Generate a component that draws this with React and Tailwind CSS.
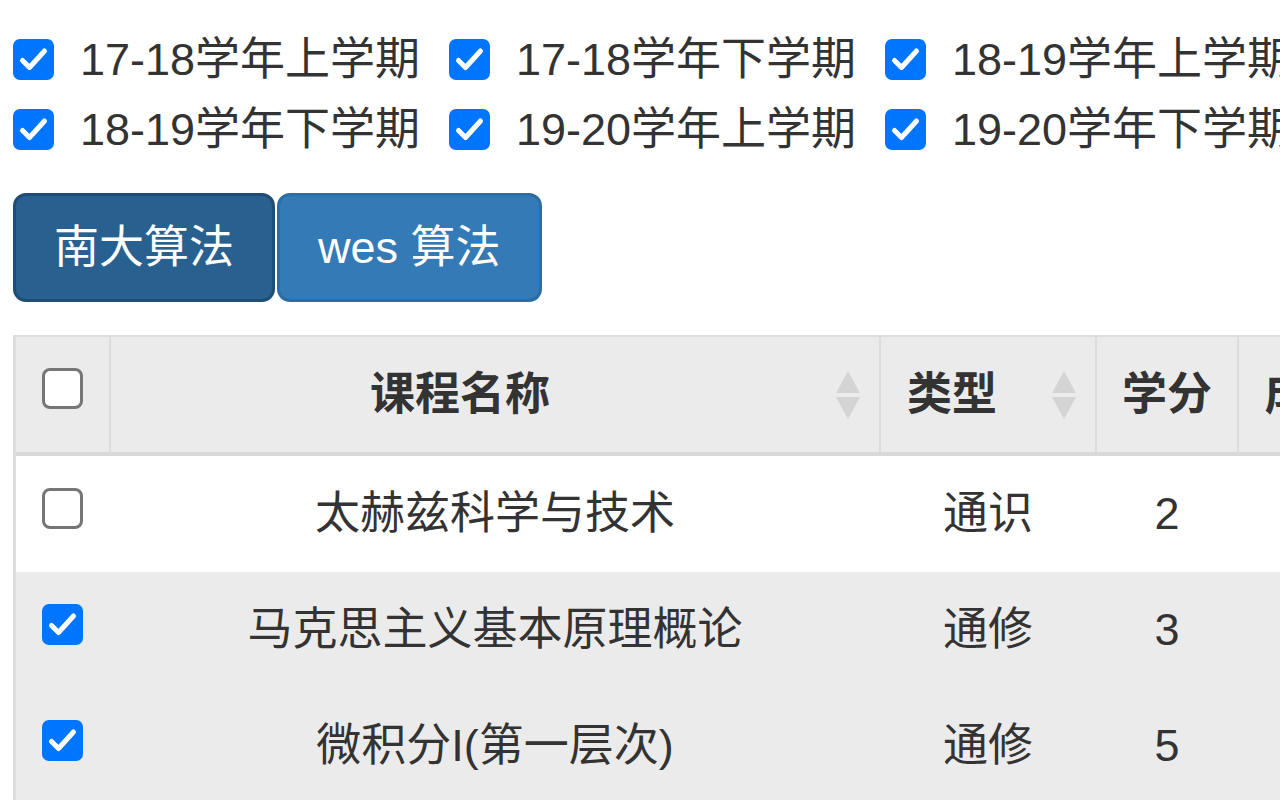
import React from 'react'

const TERMS = [
  ['17-18学年上学期', '17-18学年下学期', '18-19学年上学期'],
  ['18-19学年下学期', '19-20学年上学期', '19-20学年下学期'],
]

const COURSES = [
  { name: '太赫兹科学与技术', type: '通识', credit: '2', score: '88', checked: false },
  { name: '马克思主义基本原理概论', type: '通修', credit: '3', score: '85', checked: true },
  { name: '微积分I(第一层次)', type: '通修', credit: '5', score: '92', checked: true },
]

// big scaled checkbox, drawn like chrome's native one
function Box({ checked }) {
  if (checked) {
    return (
      <span className="flex-shrink-0 w-[41px] h-[41px] rounded-[7px] bg-[#0075ff] flex items-center justify-center">
        <svg width="41" height="41" viewBox="0 0 41 41">
          <path d="M9.5 21.5 L16.5 28.5 L31.5 12" fill="none" stroke="#fff" strokeWidth="5" strokeLinecap="round" strokeLinejoin="round" />
        </svg>
      </span>
    )
  }
  return <span className="flex-shrink-0 w-[41px] h-[41px] rounded-[8px] border-[3px] border-[#767676] bg-white" />
}

function SortArrows() {
  return (
    <svg className="absolute right-[18px] top-1/2 -translate-y-1/2" width="26" height="50" viewBox="0 0 26 50">
      <path d="M13 1 L25 23 L1 23 Z" fill="#d4d4d4" />
      <path d="M13 49 L25 27 L1 27 Z" fill="#d4d4d4" />
    </svg>
  )
}

const COLS = 'grid grid-cols-[93px_770px_216px_142px_143px_300px]'

export default function App() {
  return (
    <div className="w-[1280px] h-[800px] overflow-hidden bg-white text-[#333] font-[family-name:Liberation_Sans,Noto_Sans_CJK_SC,sans-serif]">
      {/* term filters */}
      <div className="pt-[24px] pl-[13px]">
        {TERMS.map((row, i) => (
          <div key={i} className="flex h-[70px] items-center whitespace-nowrap">
            {row.map(t => (
              <label key={t} className="flex-shrink-0 w-[436px] flex items-center">
                <Box checked />
                <span className="ml-[26px] text-[45px] leading-none">{t}</span>
              </label>
            ))}
          </div>
        ))}
      </div>

      {/* algorithm switch */}
      <div className="mt-[29px] pl-[13px] flex gap-[2px]">
        <button className="h-[109px] px-[38px] rounded-[13px] border-[3px] border-[#204d74] bg-[#286090] text-white text-[45px] leading-none">
          南大算法
        </button>
        <button className="h-[109px] px-[38px] rounded-[13px] border-[3px] border-[#2e6da4] bg-[#337ab7] text-white text-[45px] leading-none">
          wes 算法
        </button>
      </div>

      {/* course table */}
      <div className="mt-[33px] ml-[13px] w-[1800px] border-l-[3px] border-t-2 border-[#dddddd]">
        <div className={`${COLS} h-[119px] bg-[#ebebeb] border-b-4 border-[#d9d9d9] font-bold text-[45px]`}>
          <div className="flex items-center justify-center pb-[12px]">
            <Box checked={false} />
          </div>
          <div className="relative border-l-2 border-[#dcdcdc] flex items-center justify-center pr-[70px]">
            课程名称
            <SortArrows />
          </div>
          <div className="relative border-l-2 border-[#dcdcdc] flex items-center justify-center pr-[72px]">
            类型
            <SortArrows />
          </div>
          <div className="border-l-2 border-[#dcdcdc] flex items-center justify-center">学分</div>
          <div className="border-l-2 border-[#dcdcdc] flex items-center justify-center">成绩</div>
          <div className="border-l-2 border-[#dcdcdc] flex items-center justify-center">绩点</div>
        </div>

        {COURSES.map(c => (
          <div key={c.name} className={`${COLS} h-[116px] text-[45px] ${c.checked ? 'bg-[#ebebeb]' : 'bg-white'}`}>
            <div className="flex items-center justify-center pb-[11px]">
              <Box checked={c.checked} />
            </div>
            <div className="border-l-2 border-transparent flex items-center justify-center">{c.name}</div>
            <div className="border-l-2 border-transparent flex items-center justify-center">{c.type}</div>
            <div className="border-l-2 border-transparent flex items-center justify-center">{c.credit}</div>
            <div className="border-l-2 border-transparent flex items-center justify-center">{c.score}</div>
            <div className="border-l-2 border-transparent flex items-center justify-center">4.0</div>
          </div>
        ))}
      </div>
    </div>
  )
}
